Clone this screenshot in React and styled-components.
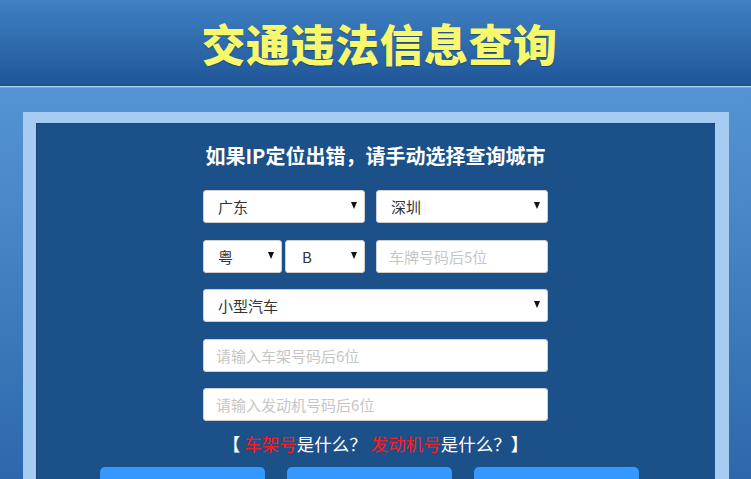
import React from 'react';
import styled, { createGlobalStyle } from 'styled-components';

const GlobalStyle = createGlobalStyle`
  html, body {
    margin: 0;
    padding: 0;
    height: 100%;
    overflow: hidden;
  }
  body {
    font-family: "Noto Sans CJK SC", "Liberation Sans", sans-serif;
    background: linear-gradient(to bottom, #5d9dda 0px, #4a88c9 200px, #2c68ab 479px);
  }
`;

const Header = styled.header`
  height: 85px;
  display: flex;
  align-items: center;
  justify-content: center;
  background: linear-gradient(to bottom, #3f81c3, #1f5698);
  border-bottom: 1px solid #1a4d8c;
  box-shadow: 0 1px 0 #a9daf2, 0 2px 0 #6fa7dc;
`;

const Title = styled.h1`
  margin: 0 0 0 8px;
  font-size: 44px;
  font-weight: 900;
  letter-spacing: 0.5px;
  color: #f8f86c;
  text-shadow: 0 1px 1px rgba(20, 40, 90, 0.5);
`;

const Main = styled.main`
  padding: 26px 22px 0 23px;
`;

const Frame = styled.section`
  border: solid #a6ccf2;
  border-width: 11px 14px 0 13px;
  background: #1b5089;
  box-shadow: inset 1px 1px 0 #16457a;
`;

const Panel = styled.div`
  padding: 20px 0 0;
  display: flex;
  flex-direction: column;
  align-items: center;
`;

const Subtitle = styled.h2`
  margin: 0 0 21px;
  font-size: 20px;
  line-height: 26px;
  font-weight: 700;
  color: #ffffff;
`;

const Form = styled.form`
  width: 345px;
  display: flex;
  flex-direction: column;
  gap: 16.5px;
`;

const Row = styled.div`
  display: flex;
  gap: ${p => p.$gap || 11}px;
`;

const SelectWrap = styled.div`
  position: relative;
  width: ${p => p.$w ? `${p.$w}px` : 'auto'};
  flex: ${p => p.$w ? 'none' : 1};
`;

const Select = styled.select`
  appearance: none;
  width: 100%;
  height: 33px;
  box-sizing: border-box;
  padding: 0 0 0 ${p => p.$pad || 14}px;
  border: 1px solid #cfcfcf;
  border-radius: 3px;
  background: #fff;
  font-family: "Noto Sans CJK SC", "Liberation Sans", sans-serif;
  font-size: 15px;
  color: #333;
  outline: none;
`;

const Caret = styled.span`
  position: absolute;
  right: 8px;
  top: 12px;
  width: 0;
  height: 0;
  border-left: 3.5px solid transparent;
  border-right: 3.5px solid transparent;
  border-top: 7px solid #111;
  pointer-events: none;
`;

const Input = styled.input`
  flex: 1;
  min-width: 0;
  height: 33px;
  box-sizing: border-box;
  padding: 0 12px;
  margin-left: ${p => p.$offset || 0}px;
  border: 1px solid #cfcfcf;
  border-radius: 3px;
  background: #fff;
  font-family: "Noto Sans CJK SC", "Liberation Sans", sans-serif;
  font-size: 15px;
  color: #333;
  outline: none;
  &::placeholder {
    color: #c6c6c6;
  }
`;

const Help = styled.p`
  margin: 13px 0 0;
  font-size: 17.5px;
  line-height: 20px;
  color: #ffffff;
  text-align: center;
  white-space: pre;
`;

const Bracket = styled.b`
  font-weight: 700;
`;

const Red = styled.a`
  color: #ff1a1a;
  text-decoration: none;
`;

const Buttons = styled.div`
  align-self: stretch;
  display: flex;
  gap: 22px;
  padding-left: 64px;
  margin-top: 13px;
`;

const Button = styled.button`
  width: 165px;
  height: 44px;
  border: none;
  border-radius: 5px;
  background: #3399ff;
  color: #fff;
  font-family: "Noto Sans CJK SC", "Liberation Sans", sans-serif;
  font-size: 16px;
  line-height: 16px;
  padding: 16px 0 0;
`;

const Dropdown = ({ w, pad, children }) => (
  <SelectWrap $w={w}>
    <Select $pad={pad}>{children}</Select>
    <Caret />
  </SelectWrap>
);

const App = () => {
  return (
    <>
      <GlobalStyle />
      <Header>
        <Title>交通违法信息查询</Title>
      </Header>
      <Main>
        <Frame>
          <Panel>
            <Subtitle>如果IP定位出错，请手动选择查询城市</Subtitle>
            <Form onSubmit={e => e.preventDefault()}>
              <Row $gap={11}>
                <Dropdown w={162}><option>广东</option></Dropdown>
                <Dropdown><option>深圳</option></Dropdown>
              </Row>
              <Row $gap={3}>
                <Dropdown w={79}><option>粤</option></Dropdown>
                <Dropdown w={80} pad={16}><option>B</option></Dropdown>
                <Input $offset={8} placeholder="车牌号码后5位" />
              </Row>
              <Row>
                <Dropdown><option>小型汽车</option></Dropdown>
              </Row>
              <Row>
                <Input placeholder="请输入车架号码后6位" />
              </Row>
              <Row>
                <Input placeholder="请输入发动机号码后6位" />
              </Row>
            </Form>
            <Help>
              <Bracket>【</Bracket>{' '}<Red href="#">车架号</Red>是什么？ <Red href="#">发动机号</Red>是什么？<Bracket>】</Bracket>
            </Help>
            <Buttons>
              <Button>查询</Button>
              <Button>重置</Button>
              <Button>帮助</Button>
            </Buttons>
          </Panel>
        </Frame>
      </Main>
    </>
  );
};

export default App;
